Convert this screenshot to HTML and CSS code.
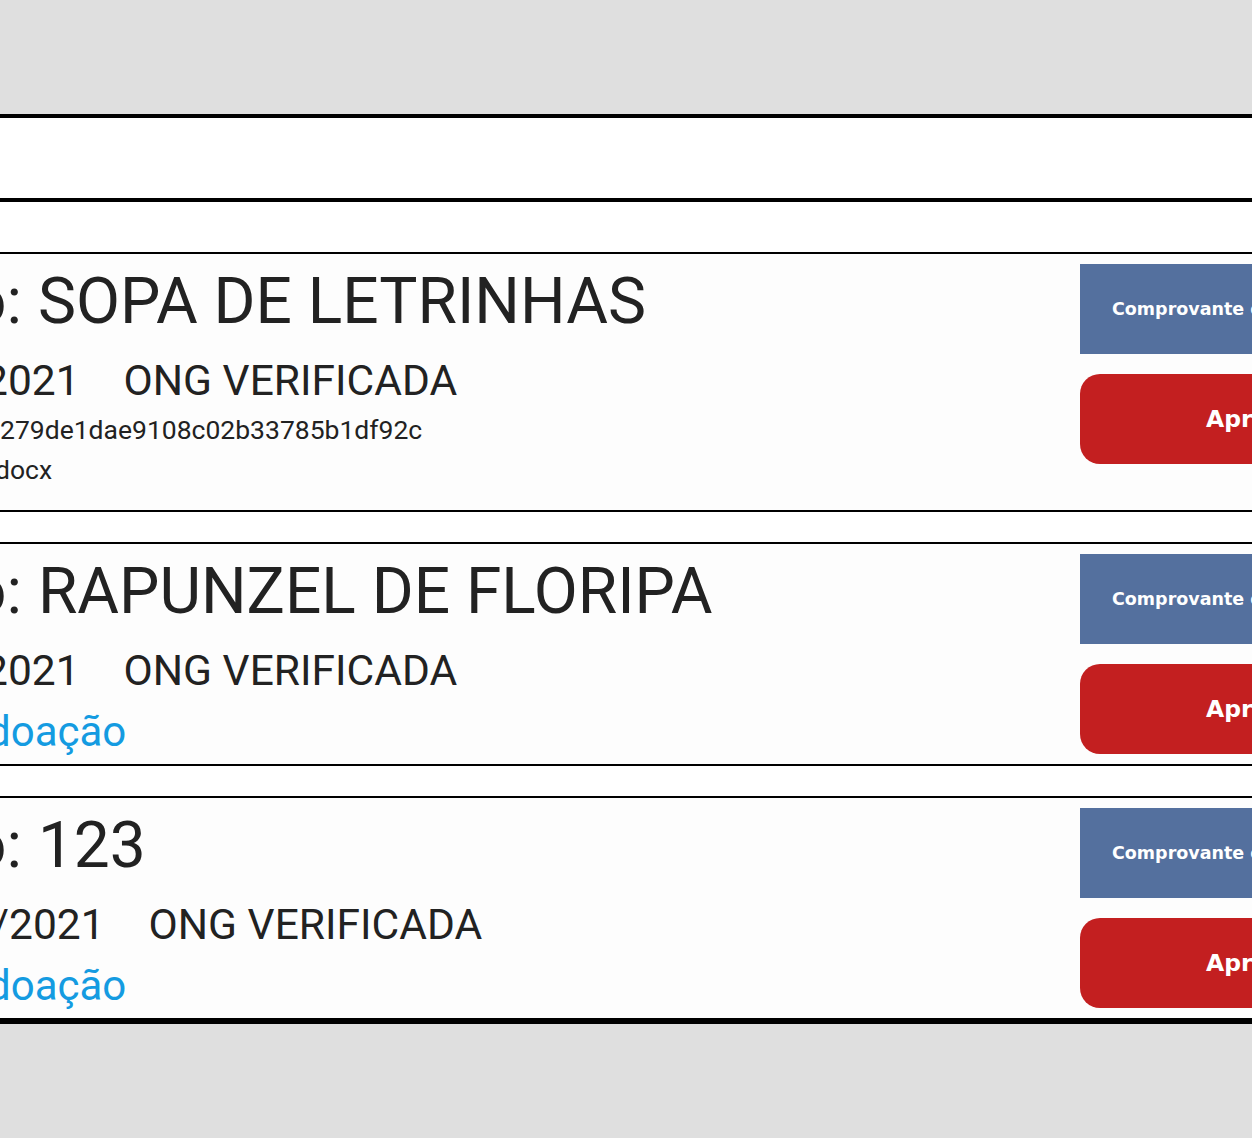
FILE: index.html
```html
<!DOCTYPE html>
<html lang="pt-BR">
<head>
<meta charset="utf-8">
<title>Doações</title>
<link rel="stylesheet" href="styles.css">
</head>
<body>
<div class="frame">
  <header class="frame-head"></header>
  <main class="list">
    <article class="card">
      <div class="info">
        <h2 class="title"><span class="k k-title">Projeto:</span> SOPA DE LETRINHAS</h2>
        <p class="meta"><span class="k k-date">Data: 12/05/</span>2021<span class="ong">ONG VERIFICADA</span></p>
        <p class="small"><span class="k k-hash">Hash: 8c1f3a</span>279de1dae9108c02b33785b1df92c</p>
        <p class="small file"><span class="k k-file">Arquivo: comprovante.</span>docx</p>
      </div>
      <div class="actions">
        <button class="btn btn-proof">Comprovante de doação</button>
        <button class="btn btn-approve">Aprovar</button>
      </div>
    </article>
    <article class="card">
      <div class="info">
        <h2 class="title"><span class="k k-title">Projeto:</span> RAPUNZEL DE FLORIPA</h2>
        <p class="meta"><span class="k k-date">Data: 14/05/</span>2021<span class="ong">ONG VERIFICADA</span></p>
        <p class="link-line"><a class="link" href="#"><span class="k k-link">Ver </span>doação</a></p>
      </div>
      <div class="actions">
        <button class="btn btn-proof">Comprovante de doação</button>
        <button class="btn btn-approve">Aprovar</button>
      </div>
    </article>
    <article class="card">
      <div class="info">
        <h2 class="title"><span class="k k-title">Projeto:</span> 123</h2>
        <p class="meta"><span class="k k-date-wide">Data: 20/05/</span>2021<span class="ong">ONG VERIFICADA</span></p>
        <p class="link-line"><a class="link" href="#"><span class="k k-link">Ver </span>doação</a></p>
      </div>
      <div class="actions">
        <button class="btn btn-proof">Comprovante de doação</button>
        <button class="btn btn-approve">Aprovar</button>
      </div>
    </article>
  </main>
</div>
</body>
</html>
```
FILE: styles.css
```css
html, body {
  margin: 0;
  padding: 0;
}

body {
  background: #dfdfdf;
  overflow: hidden;
  font-family: Roboto, "Liberation Sans", sans-serif;
  color: #222222;
}

.frame {
  margin-top: 114px;
  margin-left: -320px;
  width: 2000px;
  background: #ffffff;
  border-top: 4px solid #000;
  border-bottom: 4px solid #000;
}

.frame-head {
  height: 80px;
  border-bottom: 4px solid #000;
}

.list {
  padding-top: 50px;
  display: flex;
  flex-direction: column;
  gap: 30px;
}

.card {
  display: grid;
  grid-template-columns: 1400px 400px;
  padding: 10px 0;
  background: #fdfdfd;
  border-top: 2px solid #000;
  border-bottom: 2px solid #000;
}

.info {
  min-width: 0;
  white-space: nowrap;
}

.k {
  display: inline-block;
  text-align: right;
  white-space: nowrap;
}

.title {
  margin: 0;
  font-size: 64px;
  line-height: 76px;
  font-weight: 400;
}

.k-title { width: 342px; }

.meta {
  margin: 16px 0 0;
  font-size: 42.5px;
  line-height: 50px;
}

.k-date { width: 304px; }
.k-date-wide { width: 329px; }

.ong {
  margin-left: 44px;
}

.small {
  margin: 8px 0 0;
  font-size: 26.5px;
  line-height: 32px;
}

.k-hash { width: 320px; }
.k-file { width: 315px; }

.file {
  margin-bottom: 14px;
}

.link-line {
  margin: 14px 0 0;
  font-size: 42px;
  line-height: 44px;
}

.link {
  color: #149be1;
  text-decoration: none;
}

.k-link { width: 307px; }

.actions {
  display: flex;
  flex-direction: column;
  gap: 20px;
}

.btn {
  display: block;
  width: 400px;
  height: 90px;
  border: 0;
  color: #ffffff;
  font-family: "DejaVu Sans", Lato, sans-serif;
  font-weight: 700;
  text-align: left;
  cursor: pointer;
}

.btn-proof {
  background: #54709e;
  font-size: 17.5px;
  padding: 0 0 0 32px;
}

.btn-approve {
  background: #c31f20;
  border-radius: 20px;
  font-size: 23.5px;
  padding: 0 0 0 126px;
}
```
